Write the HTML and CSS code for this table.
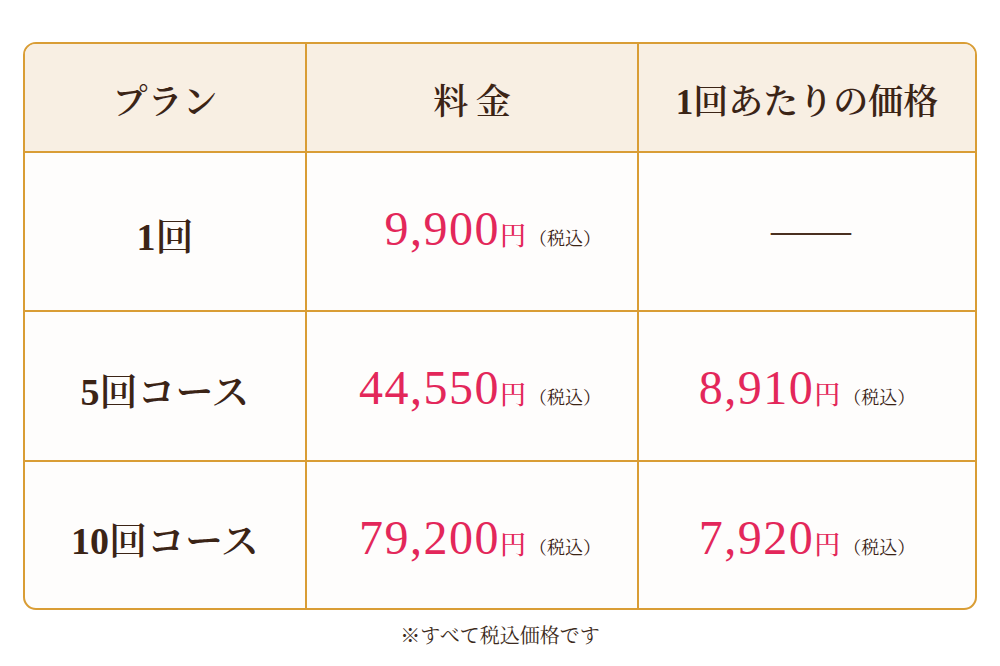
FILE: index.html
```html
<!DOCTYPE html>
<html lang="ja">
<head>
<meta charset="utf-8">
<title>料金表</title>
<link rel="stylesheet" href="styles.css">
</head>
<body>
<main class="page">
  <div class="table">
    <div class="cell head">プラン</div>
    <div class="cell head"><span class="spaced">料金</span></div>
    <div class="cell head last-col">1回あたりの価格</div>

    <div class="cell plan">1回</div>
    <div class="cell price col2"><span class="num">9,900</span><span class="yen">円</span><span class="tax">（税込）</span></div>
    <div class="cell price last-col"><span class="dash">——</span></div>

    <div class="cell plan">5回コース</div>
    <div class="cell price col2"><span class="num">44,550</span><span class="yen">円</span><span class="tax">（税込）</span></div>
    <div class="cell price last-col"><span class="num">8,910</span><span class="yen">円</span><span class="tax">（税込）</span></div>

    <div class="cell plan last-row">10回コース</div>
    <div class="cell price col2 last-row"><span class="num">79,200</span><span class="yen">円</span><span class="tax">（税込）</span></div>
    <div class="cell price last-col last-row"><span class="num">7,920</span><span class="yen">円</span><span class="tax">（税込）</span></div>
  </div>
  <p class="note">※すべて税込価格です</p>
</main>
</body>
</html>
```

FILE: styles.css
```css
* { box-sizing: border-box; }
html, body { margin: 0; padding: 0; background: #ffffff; }
body {
  font-family: "Noto Serif CJK JP", "Liberation Serif", "Noto Sans CJK JP", serif;
  color: #3b2416;
}
.page {
  width: 1000px;
  height: 666px;
  padding: 42px 23px 0 23px;
}
.table {
  display: grid;
  grid-template-columns: 282px 332px 336px;
  grid-template-rows: 109px 159px 150px 146px;
  width: 954px;
  border: 2px solid #d99d35;
  border-radius: 13px;
  overflow: hidden;
  background: #fefdfc;
}
.cell {
  display: flex;
  align-items: center;
  justify-content: center;
  border-right: 2px solid #d99d35;
  border-bottom: 2px solid #d99d35;
}
.last-col { border-right: none; }
.last-row { border-bottom: none; }
.head {
  background: #f8efe3;
  font-family: "Liberation Serif", "Noto Serif CJK JP", "Noto Sans CJK JP", serif;
  font-size: 35px;
  font-weight: 600;
  padding-top: 2px;
  color: #3b2416;
}
.spaced { letter-spacing: 0.22em; margin-right: -0.22em; }
.plan {
  font-family: "Liberation Serif", "Noto Serif CJK JP", "Noto Sans CJK JP", serif;
  font-size: 38px;
  font-weight: 600;
  color: #3b2416;
  padding-top: 4px;
}
.price {
  align-items: baseline;
  padding-top: 52px;
}
.price.col2 { justify-content: flex-end; padding-right: 36px; }
.num {
  font-family: "Liberation Serif", serif;
  font-size: 48px;
  letter-spacing: 1.5px;
  color: #e3275a;
  line-height: 1;
}
.yen {
  font-family: "Noto Serif CJK JP", "Noto Sans CJK JP", sans-serif;
  font-size: 26px;
  font-weight: 500;
  color: #e3275a;
  margin-left: 0;
  line-height: 1;
}
.tax {
  font-family: "Noto Serif CJK JP", "Noto Sans CJK JP", sans-serif;
  font-size: 18px;
  color: #3b2416;
  margin-left: 3px;
  line-height: 1;
}
.dash {
  font-family: "Liberation Serif", serif;
  font-size: 40px;
  line-height: 1;
  color: #4a3020;
  margin-left: 8px;
  position: relative;
  top: 5px;
}
.note {
  margin: 12px 0 0 0;
  text-align: center;
  font-family: "Noto Serif CJK JP", "Noto Sans CJK JP", sans-serif;
  font-size: 20px;
  line-height: 26px;
  color: #3b2a20;
}
```
